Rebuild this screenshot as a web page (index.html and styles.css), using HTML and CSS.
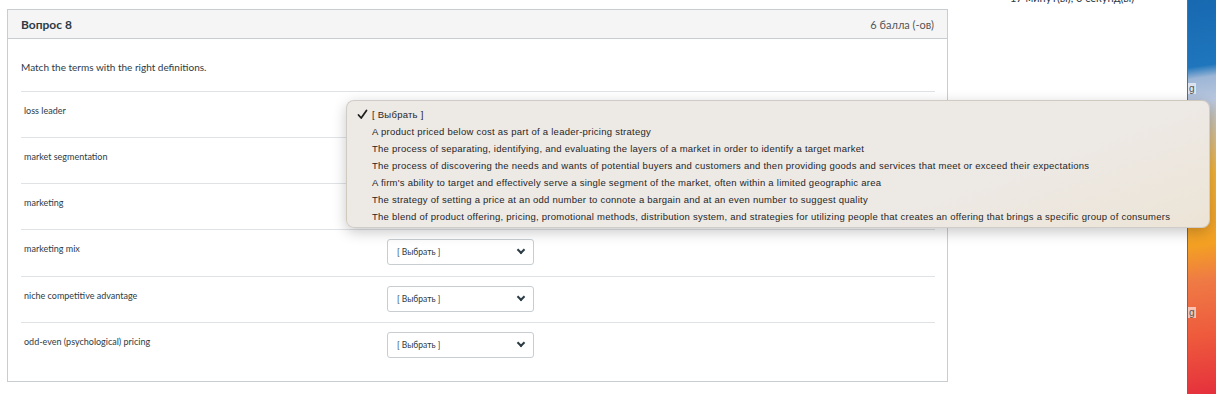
FILE: index.html
```html
<!DOCTYPE html>
<html lang="ru">

<head>
    <meta charset="UTF-8">
    <meta name="viewport" content="width=device-width, initial-scale=1.0">
    <title>Вопрос 8</title>
    <link rel="stylesheet" href="styles.css">
</head>

<body>
    <div class="screen">
        <div class="page">
            <div class="question">
                <div class="question-header">
                    <span class="question-title">Вопрос 8</span>
                    <span class="question-points">6 балла (-ов)</span>
                </div>

                <div class="question-body">
                    <p class="question-text">Match the terms with the right definitions.</p>

                    <div class="match-row">
                        <div class="match-term">loss leader</div>
                        <div class="match-select">[ Выбрать ]<span class="chevron"></span></div>
                    </div>
                    <div class="match-row">
                        <div class="match-term">market segmentation</div>
                        <div class="match-select">[ Выбрать ]<span class="chevron"></span></div>
                    </div>
                    <div class="match-row">
                        <div class="match-term">marketing</div>
                        <div class="match-select">[ Выбрать ]<span class="chevron"></span></div>
                    </div>
                    <div class="match-row">
                        <div class="match-term">marketing mix</div>
                        <div class="match-select">[ Выбрать ]<span class="chevron"></span></div>
                    </div>
                    <div class="match-row">
                        <div class="match-term">niche competitive advantage</div>
                        <div class="match-select">[ Выбрать ]<span class="chevron"></span></div>
                    </div>
                    <div class="match-row">
                        <div class="match-term">odd-even (psychological) pricing</div>
                        <div class="match-select">[ Выбрать ]<span class="chevron"></span></div>
                    </div>
                </div>
            </div>

            <div class="sidebar">
                <div class="timer">17 минут(ы), 0 секунд(ы)</div>
            </div>
        </div>

        <div class="desktop">
            <span class="desktop-label label-top">g</span>
            <span class="desktop-label label-bottom">g</span>
        </div>

        <!-- open native select menu -->
        <ul class="select-menu">
            <li class="selected">
                <svg class="check" width="11" height="11" viewBox="0 0 11 11">
                    <path d="M1.5 6 L4.2 9 L9.5 1.5" fill="none" stroke="#1f1f1f" stroke-width="1.8" stroke-linecap="round" stroke-linejoin="round" />
                </svg>[ Выбрать ]
            </li>
            <li>A product priced below cost as part of a leader-pricing strategy</li>
            <li>The process of separating, identifying, and evaluating the layers of a market in order to identify a target market</li>
            <li>The process of discovering the needs and wants of potential buyers and customers and then providing goods and services that meet or exceed their expectations</li>
            <li>A firm's ability to target and effectively serve a single segment of the market, often within a limited geographic area</li>
            <li>The strategy of setting a price at an odd number to connote a bargain and at an even number to suggest quality</li>
            <li>The blend of product offering, pricing, promotional methods, distribution system, and strategies for utilizing people that creates an offering that brings a specific group of consumers</li>
        </ul>
    </div>
</body>

</html>
```

FILE: styles.css
```css
/* Reset and base styles */
* {
    box-sizing: border-box;
    margin: 0;
    padding: 0;
}

body {
    font-family: Lato, "Liberation Sans", sans-serif;
    color: #2d3b45;
    background-color: #fff;
    overflow: hidden;
}

/* Screen */
.screen {
    position: relative;
    display: flex;
    width: 1216px;
    height: 394px;
}

.page {
    display: flex;
    width: 1187px;
    height: 394px;
    background-color: #fff;
}

/* Question card */
.question {
    width: 941px;
    height: 373px;
    margin: 9px 0 0 7px;
    border: 1px solid #c7cdd1;
}

.question-header {
    display: flex;
    justify-content: space-between;
    align-items: center;
    height: 29px;
    padding: 0 13px;
    background-color: #f5f5f5;
    border-bottom: 1px solid #c7cdd1;
}

.question-title {
    font-size: 12px;
    font-weight: 700;
}

.question-points {
    font-size: 11px;
    color: #555;
}

.question-body {
    padding: 0 12px 0 13px;
}

.question-text {
    font-size: 10px;
    line-height: 14px;
    padding: 21px 0 17px;
}

/* Match rows */
.match-row {
    display: flex;
    height: 46px;
    border-top: 1px solid #dfe3e5;
}

.match-row:nth-of-type(4) {
    height: 47px;
}

.match-term {
    width: 366px;
    padding: 12px 0 0 3px;
    font-size: 9px;
    line-height: 14px;
}

.match-select {
    position: relative;
    width: 147px;
    height: 26px;
    margin-top: 9px;
    padding-left: 9px;
    border: 1px solid #c7cdd1;
    border-radius: 3px;
    font-size: 8.5px;
    line-height: 24px;
    background-color: #fff;
}

.chevron {
    position: absolute;
    top: 7px;
    right: 9px;
    width: 6px;
    height: 6px;
    border-right: 2px solid #2d3b45;
    border-bottom: 2px solid #2d3b45;
    transform: rotate(45deg);
}

/* Sidebar */
.sidebar {
    flex: 1;
    padding-left: 9px;
    text-align: center;
}

.timer {
    margin-top: -9px;
    font-size: 11px;
    line-height: 14px;
}

/* Desktop wallpaper */
.desktop {
    position: relative;
    flex: 1;
    border-left: 1px solid #6a6a6a;
    background: linear-gradient(172deg,
            #1769b0 0%,
            #1f76bc 17%,
            #9db6d6 20%,
            #b9c7de 26%,
            #f2b23a 44%,
            #f3a023 62%,
            #ef7a45 71%,
            #ee5a3c 85%,
            #e5303c 100%);
}

.desktop-label {
    position: absolute;
    left: 0;
    padding: 0 1px;
    font-family: "Liberation Sans", sans-serif;
    font-size: 10px;
    line-height: 11px;
    color: #555;
    background-color: rgba(255, 255, 255, 0.6);
}

.label-top {
    top: 83px;
}

.label-bottom {
    top: 307px;
}

/* Select menu */
.select-menu {
    position: absolute;
    top: 100px;
    left: 346px;
    width: 864px;
    height: 128px;
    padding: 5px 0 0 10px;
    list-style: none;
    font-family: "Liberation Sans", sans-serif;
    font-size: 9.5px;
    letter-spacing: 0.25px;
    line-height: 17px;
    color: #262626;
    background: linear-gradient(160deg, #ede9e5 70%, #ece4d6 100%);
    border: 1px solid rgba(0, 0, 0, 0.12);
    border-radius: 8px;
    box-shadow: 0 4px 14px rgba(0, 0, 0, 0.22);
}

.select-menu li {
    padding-left: 15px;
    white-space: nowrap;
}

.select-menu li.selected {
    display: flex;
    align-items: center;
    padding-left: 0;
}

.check {
    margin-right: 4px;
}
```
